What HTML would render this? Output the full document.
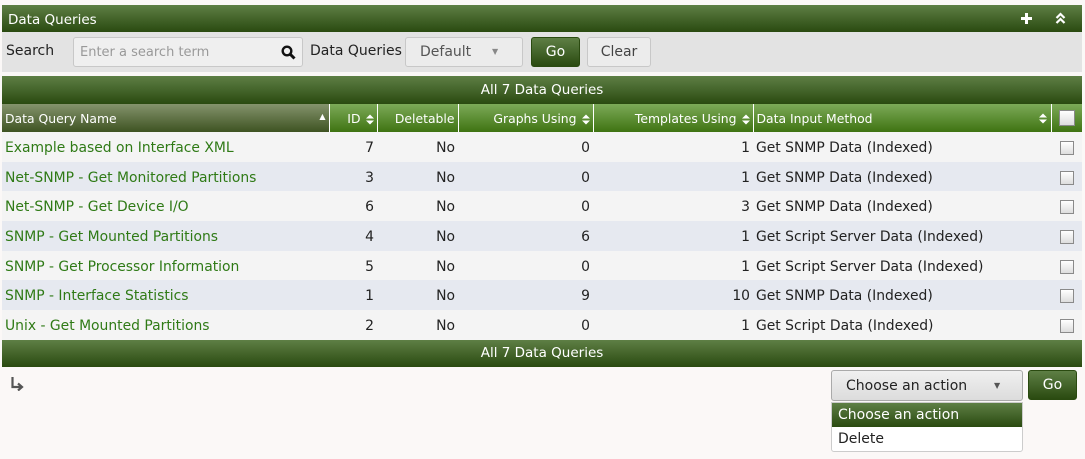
<!DOCTYPE html>
<html><head><style>
body{margin:0;width:1085px;height:459px;background:#fbf8f7;font-family:"DejaVu Sans","Liberation Sans",sans-serif;font-size:13px;color:#222;position:relative;overflow:hidden}
.g{background:linear-gradient(#5e7f45,#2a4a10) !important;color:#fff !important}
.hdr{position:absolute;left:2px;top:5px;width:1080px;height:27px;font-size:13px}
.hdr span{position:absolute;left:6px;top:7px}
.bar{position:absolute;left:2px;top:32px;width:1080px;height:40px;background:#e3e3e3}
.ab{position:absolute}
.btn{position:absolute;border:1px solid #c8c8c8;border-radius:3px;background:#ececec;text-align:center;box-sizing:border-box}
.cap{position:absolute;left:2px;width:1080px;height:28px;text-align:center;line-height:28px;font-size:13.5px}
table{position:absolute;left:2px;top:104px;width:1080px;border-collapse:collapse;table-layout:fixed}
th{background:linear-gradient(#7caa58,#3f7312);color:#fff;font-weight:normal;height:28px;font-size:12.4px;border-left:1px solid #fff;padding:0 3px;position:relative}
th:first-child{border-left:none;background:linear-gradient(#84936c,#3e5322)}
td{height:27.7px;padding:2px 3px 0;white-space:nowrap;font-size:13.9px;line-height:16px}
tr.o td{background:#f4f4f4}tr.e td{background:#e6e9f0}
td.n{color:#2f7a16}
.r{text-align:right}.c{text-align:center}
.cb{display:inline-block;width:14px;height:14px;border:1px solid #8a8a8a;background:linear-gradient(#fff,#ddd);box-sizing:border-box;vertical-align:middle}
.ar{display:inline-block;vertical-align:middle;margin-left:5px}
</style></head><body>
<div class="hdr g"><span style="font-size:13.5px">Data Queries</span>
<svg style="position:absolute;left:1018px;top:7px" width="13" height="13"><path d="M6.5 1v11M1 6.5h11" stroke="#fff" stroke-width="3"/></svg>
<svg style="position:absolute;left:1053px;top:7px" width="11" height="13"><path d="M1.5 6l4-4 4 4M1.5 11l4-4 4 4" stroke="#fff" stroke-width="2.2" fill="none"/></svg></div>
<div class="bar">
<div class="ab" style="left:4px;top:11px;font-size:14px">Search</div>
<div class="btn" style="left:71px;top:5px;width:230px;height:30px;background:#efefef;text-align:left;padding:7px 6px;color:#999;font-size:13px">Enter a search term
<svg style="position:absolute;right:6px;top:7px" width="15" height="15"><circle cx="6" cy="6" r="4.3" stroke="#111" stroke-width="2.4" fill="none"/><path d="M9 9l4.5 4.5" stroke="#111" stroke-width="3"/></svg></div>
<div class="ab" style="left:308px;top:11px;font-size:14px">Data Queries</div>
<div class="btn" style="left:403px;top:5px;width:118px;height:30px;padding-top:6px;text-align:left;padding-left:14px;color:#555;font-size:14px">Default<span style="position:absolute;left:86px;top:9px;font-size:8px;color:#888">&#9660;</span></div>
<div class="btn g" style="left:529px;top:5px;width:49px;height:30px;padding-top:6px;font-size:14px;border-color:#2a4a10">Go</div>
<div class="btn" style="left:585px;top:5px;width:64px;height:30px;padding-top:6px;font-size:14px;color:#444">Clear</div>
</div>
<div class="cap g" style="top:76px">All 7 Data Queries</div>
<table>
<colgroup><col style="width:327px"><col style="width:48px"><col style="width:81px"><col style="width:135px"><col style="width:160px"><col style="width:298px"><col style="width:31px"></colgroup>
<tr><th style="text-align:left">Data Query Name<span style="position:absolute;right:3px;top:8px;font-size:8px">&#9650;</span></th>
<th class="r">ID<svg class="ar" width="8" height="11"><path d="M0 4.5L4 0.5 8 4.5zM0 6.5L4 10.5 8 6.5z" fill="#fff"/></svg></th>
<th class="r">Deletable</th>
<th class="r">Graphs Using<svg class="ar" width="8" height="11"><path d="M0 4.5L4 0.5 8 4.5zM0 6.5L4 10.5 8 6.5z" fill="#fff"/></svg></th>
<th class="r">Templates Using<svg class="ar" width="8" height="11"><path d="M0 4.5L4 0.5 8 4.5zM0 6.5L4 10.5 8 6.5z" fill="#fff"/></svg></th>
<th style="text-align:left">Data Input Method<svg style="position:absolute;right:4px;top:9px" width="8" height="11"><path d="M0 4.5L4 0.5 8 4.5zM0 6.5L4 10.5 8 6.5z" fill="#fff"/></svg></th>
<th class="c"><span class="cb" style="width:16px;height:16px"></span></th></tr>
<tr class="o"><td class="n">Example based on Interface XML</td><td class="r">7</td><td class="r">No</td><td class="r">0</td><td class="r">1</td><td>Get SNMP Data (Indexed)</td><td class="c"><span class="cb"></span></td></tr>
<tr class="e"><td class="n">Net-SNMP - Get Monitored Partitions</td><td class="r">3</td><td class="r">No</td><td class="r">0</td><td class="r">1</td><td>Get SNMP Data (Indexed)</td><td class="c"><span class="cb"></span></td></tr>
<tr class="o"><td class="n">Net-SNMP - Get Device I/O</td><td class="r">6</td><td class="r">No</td><td class="r">0</td><td class="r">3</td><td>Get SNMP Data (Indexed)</td><td class="c"><span class="cb"></span></td></tr>
<tr class="e"><td class="n">SNMP - Get Mounted Partitions</td><td class="r">4</td><td class="r">No</td><td class="r">6</td><td class="r">1</td><td>Get Script Server Data (Indexed)</td><td class="c"><span class="cb"></span></td></tr>
<tr class="o"><td class="n">SNMP - Get Processor Information</td><td class="r">5</td><td class="r">No</td><td class="r">0</td><td class="r">1</td><td>Get Script Server Data (Indexed)</td><td class="c"><span class="cb"></span></td></tr>
<tr class="e"><td class="n">SNMP - Interface Statistics</td><td class="r">1</td><td class="r">No</td><td class="r">9</td><td class="r">10</td><td>Get SNMP Data (Indexed)</td><td class="c"><span class="cb"></span></td></tr>
<tr class="o"><td class="n">Unix - Get Mounted Partitions</td><td class="r">2</td><td class="r">No</td><td class="r">0</td><td class="r">1</td><td>Get Script Data (Indexed)</td><td class="c"><span class="cb"></span></td></tr>
</table>
<div class="cap g" style="top:340px;height:27px;line-height:27px">All 7 Data Queries</div>
<svg class="ab" style="left:10px;top:377px" width="14" height="14"><path d="M2.5 0v10h8M8 6.5l4 3.5-4 3.5" stroke="#555" stroke-width="2.2" fill="none"/></svg>
<div class="btn" style="left:831px;top:370px;width:192px;height:31px;padding-top:7px;font-size:14px;text-align:left;padding-left:14px;background:linear-gradient(#f0f0f0,#dcdcdc);border-color:#aaa">Choose an action<span style="position:absolute;left:162px;top:10px;font-size:8px;color:#555">&#9660;</span></div>
<div class="btn g" style="left:1028px;top:370px;width:49px;height:30px;padding-top:6px;font-size:14px;border-color:#2a4a10">Go</div>
<div class="ab" style="left:831px;top:402px;width:192px;height:50px;border:1px solid #ccc;border-radius:0 0 3px 3px;background:#fff;box-sizing:border-box;font-size:14px">
<div class="g" style="height:24px;line-height:24px;padding-left:6px">Choose an action</div>
<div style="height:24px;line-height:24px;padding-left:6px">Delete</div></div>
</body></html>
